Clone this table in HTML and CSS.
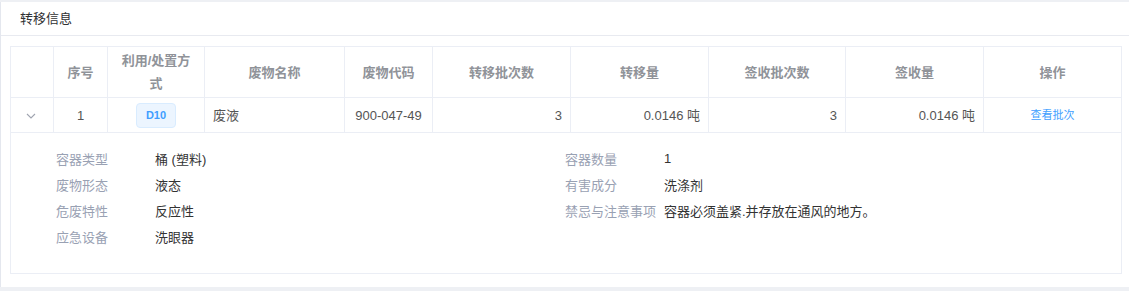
FILE: index.html
```html
<!DOCTYPE html>
<html lang="zh-CN">
<head>
<meta charset="utf-8">
<title>转移信息</title>
<link rel="stylesheet" href="styles.css">
</head>
<body>
<div class="card">
  <div class="card-header">转移信息</div>
  <div class="card-body">
    <table class="table">
      <colgroup>
        <col style="width:43px"><col style="width:54px"><col style="width:97px"><col style="width:140px"><col style="width:88px"><col style="width:138px"><col style="width:138px"><col style="width:137px"><col style="width:138px"><col style="width:138px">
      </colgroup>
      <thead>
        <tr>
          <th></th>
          <th>序号</th>
          <th>利用/处置方式</th>
          <th>废物名称</th>
          <th>废物代码</th>
          <th>转移批次数</th>
          <th>转移量</th>
          <th>签收批次数</th>
          <th>签收量</th>
          <th>操作</th>
        </tr>
      </thead>
      <tbody>
        <tr class="data-row">
          <td class="center"><svg class="chev" width="10" height="6" viewBox="0 0 10 6"><path d="M1 1 L5 5 L9 1" fill="none" stroke="#a0a4b0" stroke-width="1.1"/></svg></td>
          <td class="center">1</td>
          <td class="center"><span class="tag">D10</span></td>
          <td>废液</td>
          <td class="center">900-047-49</td>
          <td class="right">3</td>
          <td class="right">0.0146 吨</td>
          <td class="right">3</td>
          <td class="right">0.0146 吨</td>
          <td class="center"><a class="link">查看批次</a></td>
        </tr>
        <tr class="expand-row">
          <td colspan="10">
            <div class="detail">
              <div class="item"><span class="label">容器类型</span><span class="value">桶 (塑料)</span></div>
              <div class="item"><span class="label">容器数量</span><span class="value">1</span></div>
              <div class="item"><span class="label">废物形态</span><span class="value">液态</span></div>
              <div class="item"><span class="label">有害成分</span><span class="value">洗涤剂</span></div>
              <div class="item"><span class="label">危废特性</span><span class="value">反应性</span></div>
              <div class="item"><span class="label">禁忌与注意事项</span><span class="value">容器必须盖紧.并存放在通风的地方。</span></div>
              <div class="item"><span class="label">应急设备</span><span class="value">洗眼器</span></div>
            </div>
          </td>
        </tr>
      </tbody>
    </table>
  </div>
</div>
</body>
</html>
```
FILE: styles.css
```css
html, body {
  margin: 0;
  padding: 0;
}
body {
  background: #eef0f4;
  font-family: "Liberation Sans", "Noto Sans CJK SC", sans-serif;
  font-size: 13px;
  color: #333;
  padding-top: 2px;
  height: 291px;
  box-sizing: border-box;
  overflow: hidden;
}
.card {
  background: #fff;
  border-left: 1px solid #e4e7ee;
  width: 1140px;
  box-sizing: border-box;
}
.card-header {
  height: 34px;
  line-height: 33px;
  padding-left: 19px;
  font-size: 13px;
  color: #303133;
  border-bottom: 1px solid #e8eaf0;
  box-sizing: border-box;
}
.card-body {
  padding: 10px 0 13px 9px;
}
.table {
  border-collapse: collapse;
  table-layout: fixed;
  width: 1112px;
}
.table th, .table td {
  border: 1px solid #ebeef5;
  padding: 0 8px;
}
.table th {
  height: 50px;
  line-height: 23px;
  padding: 2px 10px;
  color: #909399;
  font-weight: bold;
  font-size: 13px;
  text-align: center;
  box-sizing: border-box;
}
.data-row td {
  height: 34px;
  line-height: 23px;
  color: #555;
  font-size: 13px;
}
.center { text-align: center; }
.right { text-align: right; }
.chev {
  display: inline-block;
  vertical-align: middle;
  margin-right: 2px;
}
.tag {
  display: inline-block;
  height: 23px;
  line-height: 23px;
  padding: 0 9px;
  font-size: 11px;
  font-weight: bold;
  color: #409eff;
  background: #ecf5ff;
  border: 1px solid #d9ecff;
  border-radius: 4px;
  vertical-align: middle;
}
.link {
  color: #409eff;
  font-size: 11px;
}
.expand-row td {
  padding: 12px 47px 24px 45px;
}
.detail {
  display: grid;
  grid-template-columns: 1fr 1fr;
  grid-auto-rows: 26px;
}
.item {
  display: flex;
  align-items: center;
  font-size: 13px;
}
.label {
  width: 99px;
  color: #99a1b3;
  flex: none;
}
.value {
  color: #333;
}
```
